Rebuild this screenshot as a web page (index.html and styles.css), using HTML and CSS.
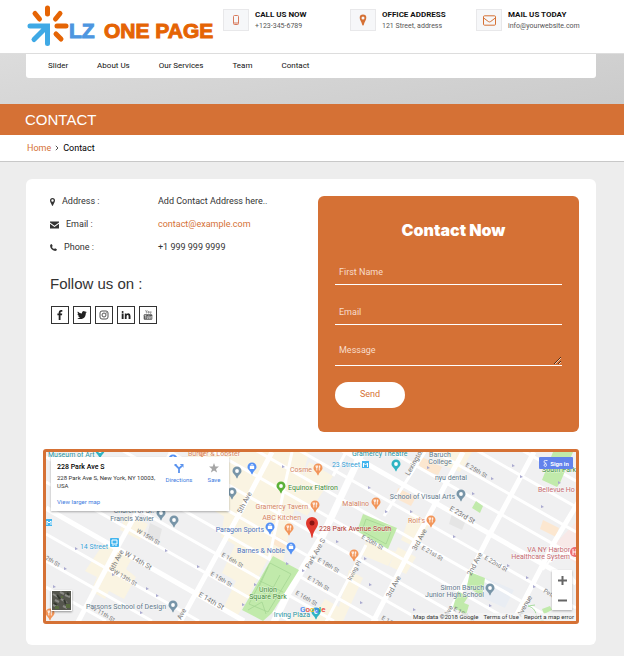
FILE: index.html
```html
<!DOCTYPE html>
<html lang="en">
<head>
    <meta charset="UTF-8">
    <meta name="viewport" content="width=device-width, initial-scale=1.0">
    <title>Contact - LZ One Page</title>
    <link rel="stylesheet" href="styles.css">
</head>
<body>
    <!-- Header -->
    <header class="header">
        <a class="logo" href="#" aria-label="LZ One Page">
            <svg width="190" height="44" viewBox="0 0 190 44">
                <g stroke="#e56404" stroke-width="5" stroke-linecap="round">
                    <path d="M20.500 4v6M8 9.500l4.500 5.500M33 9.500l-4.500 5.500M30 22h9M29 30l5 5"/>
                </g>
                <g stroke="#3fa9e5" stroke-width="5" stroke-linecap="round" fill="none">
                    <path d="M3 22h17.500v17.500M18 24.500L7 35.500"/>
                </g>
                <text class="logo-lz" x="42" y="34">LZ</text>
                <text class="logo-name" x="77" y="34">ONE PAGE</text>
            </svg>
        </a>
        <div class="info">
            <span class="info-icon">
                <svg width="6" height="10" viewBox="0 0 6 10"><path d="M1.500 .5h3q1 0 1 1v7q0 1-1 1h-3q-1 0-1-1v-7q0-1 1-1z" fill="none" stroke="#d87a5c"/><path d="M1 8h4" stroke="#d87a5c"/></svg>
            </span>
            <div>
                <h2>CALL US NOW</h2>
                <p>+123-345-6789</p>
            </div>
        </div>
        <div class="info">
            <span class="info-icon">
                <svg width="8" height="12" viewBox="0 0 8 12"><path d="M4 .5a3.300 3.300 0 0 1 3.300 3.300C7.300 6 5.500 8 4.700 11q-.7 1-1.400 0C2.500 8 .7 6 .7 3.800A3.300 3.300 0 0 1 4 .5zm0 2a1.500 1.500 0 1 0 0 3 1.500 1.500 0 0 0 0-3z" fill="#d57135" fill-rule="evenodd"/></svg>
            </span>
            <div>
                <h2>OFFICE ADDRESS</h2>
                <p>121 Street, address</p>
            </div>
        </div>
        <div class="info">
            <span class="info-icon">
                <svg width="13" height="11" viewBox="0 0 13 11"><path d="M1.500 .8h10q1 0 1 1v7.400q0 1-1 1h-10q-1 0-1-1V1.800q0-1 1-1zM.7 3l4.600 3.500q1.200.9 2.400 0L12.300 3" fill="none" stroke="#d57135"/></svg>
            </span>
            <div>
                <h2>MAIL US TODAY</h2>
                <p>info@yourwebsite.com</p>
            </div>
        </div>
    </header>

    <!-- Menu -->
    <div class="menu-wrap">
        <nav class="menu">
            <a href="#">Slider</a>
            <a href="#">About Us</a>
            <a href="#">Our Services</a>
            <a href="#">Team</a>
            <a href="#">Contact</a>
        </nav>
    </div>

    <div class="banner">
        <h1>CONTACT</h1>
    </div>
    <div class="breadcrumb">
        <a href="#">Home</a>
        <svg width="4" height="6" viewBox="0 0 4 6"><path d="M.8 .8L3 3 .8 5.200" fill="none" stroke="#555"/></svg>
        <span>Contact</span>
    </div>

    <main class="content">
        <div class="columns">
            <!-- Contact details -->
            <section class="details">
                <dl>
                    <div class="row">
                        <dt><svg width="5" height="8" viewBox="0 0 5 8"><path d="M2.500 0A2.500 2.500 0 0 1 5 2.500C5 4.500 3.500 5.500 3 7.600q-.5.700-1 0C1.500 5.500 0 4.500 0 2.500A2.500 2.500 0 0 1 2.500 0zm0 1.300a1.200 1.200 0 1 0 0 2.400 1.200 1.200 0 0 0 0-2.400z" fill="#333" fill-rule="evenodd"/></svg>Address :</dt>
                        <dd>Add Contact Address here..</dd>
                    </div>
                    <div class="row">
                        <dt><svg width="9" height="8" viewBox="0 0 9 8"><path d="M0 .5h9v1L4.500 4.700 0 1.500zM0 2.700l4.500 3.200L9 2.700v4.800H0z" fill="#333"/></svg>Email :</dt>
                        <dd><a href="#">contact@example.com</a></dd>
                    </div>
                    <div class="row">
                        <dt><svg width="7" height="7" viewBox="0 0 7 7"><path d="M.3.800L1.700.100 2.700 2 1.900 2.900Q2.600 4.400 4.100 5.100L5 4.300 6.900 5.300Q7 6.900 5.200 7 .2 5.800.1 1.800z" fill="#333"/></svg>Phone :</dt>
                        <dd>+1 999 999 9999</dd>
                    </div>
                </dl>
                <h3>Follow us on :</h3>
                <div class="social">
                    <a href="#" aria-label="Facebook"><svg width="10" height="10" viewBox="0 0 10 10"><path d="M7.300.1v1.600H6.200q-.7 0-.7.800v1.100h1.700L7 5.200H5.500V10H3.700V5.200H2.400V3.600h1.300V2.300Q3.800.2 5.900 0z" fill="#222"/></svg></a>
                    <a href="#" aria-label="Twitter"><svg width="10" height="10" viewBox="0 0 10 10"><path d="M9.800 2.200l-1 1Q8.700 7 5.900 8.500 3 9.800.2 8.200q1.800.1 2.900-.8Q1.700 7.200 1.200 6l.9-.1Q.6 5.400.5 3.900l.9.200Q0 2.900.8 1.400 2.500 3.400 4.900 3.500 4.700 1.300 6.700 1.100q.8 0 1.400.6l1.300-.5-.8 1.100z" fill="#222"/></svg></a>
                    <a href="#" aria-label="Instagram"><svg width="10" height="10" viewBox="0 0 10 10"><rect x="1" y="1" width="8" height="8" rx="2" fill="none" stroke="#555"/><circle cx="5" cy="5" r="2" fill="none" stroke="#555"/><circle cx="7.300" cy="2.800" r=".6" fill="#555"/></svg></a>
                    <a href="#" aria-label="LinkedIn"><svg width="10" height="10" viewBox="0 0 10 10"><path d="M.7 3.500h1.900V9H.7zM3.800 3.500h1.800v.8q.6-1 1.800-1Q9.500 3.400 9.500 6v3H7.600V6.200Q7.600 4.900 6.700 4.900q-1 0-1.100 1.300V9H3.800z" fill="#222"/><circle cx="1.600" cy="1.900" r="1" fill="#222"/></svg></a>
                    <a href="#" aria-label="YouTube"><svg width="10" height="10" viewBox="0 0 10 10"><path d="M2.500.2l.9 1.700v1.500M4.300.2L3.400 1.900M5 1.500v1.500h.9V1.500zM7 1.300v1.900h1V1.300" fill="none" stroke="#777" stroke-width=".7"/><rect x=".7" y="4.200" width="8.600" height="5.500" rx="1" fill="#555"/><path d="M1.500 5.500h1.800M2.400 5.500v3.200M4 6.200v2.300h.9V6.200M5.900 5.200v3.400h.7V6.500M7.700 7.300h.8V6.500h-.8v2h.9" fill="none" stroke="#fff" stroke-width=".5"/></svg></a>
                </div>
            </section>

            <!-- Contact form -->
            <form class="contact-form">
                <h2>Contact Now</h2>
                <input type="text" aria-label="First Name" placeholder="First Name">
                <input type="email" aria-label="Email" placeholder="Email">
                <textarea aria-label="Message" placeholder="Message"></textarea>
                <button type="button">Send</button>
            </form>
        </div>

        <!-- Map -->
        <div class="map">
            <svg class="map-canvas" viewBox="0 0 530 169" preserveAspectRatio="xMidYMid slice">
                <defs>
                    <path id="pin" d="M0-4.500A4.500 4.500 0 0 1 4.500 0C4.500 2.500 1.500 3.500.5 7q-.5.800-1 0C-1.500 3.500-4.500 2.500-4.500 0A4.500 4.500 0 0 1 0-4.500z"/>
                    <g id="place"><use href="#pin"/><circle r="1.900" fill="#fff"/></g>
                    <g id="food"><use href="#pin"/><path d="M-1.200-2.500v5M-2-2.500v1.800h1.600v-1.800M1.300-2.500v5M1.800-2.300v2" stroke="#fff" stroke-width=".8" fill="none"/></g>
                    <g id="shop"><use href="#pin"/><path d="M-2.200-1h4.400v3h-4.400z" fill="#fff"/><path d="M-1-1v-1.300h2V-1" stroke="#fff" stroke-width=".7" fill="none"/></g>
                </defs>
                <rect width="530" height="169" fill="#f0f0f1"/>

                <!-- Commercial areas -->
                <g fill="#faf4e2">
                    <path d="M144 0h80l-36 70-60-34zM188 0h75l-18 70-8 40-14-5-32 60-14-8 13-28-14-8 13-28-14-8z"/>
                    <path d="M60 88l28 15-8 14 10 8-12 22-15-8-4 8-14-8 6-14-12-6z"/>
                    <path d="M80 62l22 10-8 16-20-10zM263 10l24 14-26 40-15-8zM303 118l14 8-20 43h-32l14-22 14 8z"/>
                    <path d="M396 0h30l-12 20-20-8zM365 60l20 10-14 26-16-8zM352 95l18 10-10 17-17-8zM320 90l30 10-8 14-28-12zM250 160l25 8h-28z"/>
                </g>
                <g fill="#fce7d0">
                    <path d="M352 36l18 9-5 9-16-8zM372 3l24 12-4 8-18-6zM497 68l16 8-3 9-16-8zM228 83l14 7-4 8-13-7z"/>
                </g>
                <path d="M530 70l-23 24 23 18z" fill="#f8e9e8"/>
                <path d="M440 126l28 12-9 18-24-11z" fill="#e9edf3"/>
                <path d="M104 71l12 6-3 12-12-5zM406 62l14 6-4 10-13-6z" fill="#e5e5e5"/>

                <!-- Streets -->
                <g stroke="#fff" stroke-width="3" fill="none">
                    <path d="M0 135l60 34M0 109l106 60M0 82l153 87M0 30l244 139M0 5l288 164M0-20l332 189M0-45l376 214M0-71l421 240M0-96l465 265M0-121l510 290M0-146l530 302M0-197l530 302M0-222l530 302M0-247l530 302M0-273l530 302"/>
                    <path d="M320 93l-40 77M246 0l-20 93-3 14M338 64l41-64M160 2l-30 50M300 0l-13 24"/>
                    <path d="M32 170l39-74 20-36 35-60" stroke-width="5"/>
                    <path d="M133 172l64-117 29-55M327 170l40-77 50-93M399 170l45-88 44-82M467 170l42-81 24-40" stroke-width="5"/>
                    <path d="M0 56l198 113M0-171l530 302" stroke-width="5"/>
                    <path d="M228 170l14-29 35-58 39-83" stroke-width="7"/>
                </g>
                <path d="M504 110l11-9 15 7M497 118l10-14M522 119l8 12" stroke="#fff" stroke-width="2" fill="none"/>

                <!-- Parks -->
                <g fill="#c1eaab">
                    <path d="M227 104l26 14-27 43-9 8-21-11z"/>
                    <path d="M317 62l34 14-9 21-31-18z"/>
                    <path d="M424 120l15 6-3 19-15-11zM412 139l10 6-4 6 5 2-3 10-13-8z"/>
                    <path d="M430 49l7 5-3 7-8-5zM507 0h20l-13 31-3 4-15-7zM496 157l8-3 2 4-8 4z"/>
                </g>
                <path d="M482 154q7 2 8 8t8 7M482 154l7-1" stroke="#a9dca0" fill="none"/>
                <path d="M224 111l21 11-23 38-19-8zM214 129l23 11M222 115l-9 20 9 10 12-22M202 158l14-8 4 12" stroke="#a4d693" stroke-width=".8" fill="none"/>
                <path d="M320 67l26 10-6 15-24-13z" stroke="#a4d693" stroke-width=".8" fill="none"/>

                <!-- One way arrows -->
                <g fill="#a9a9cf">
                    <path d="M29 95l3 2-3 1zM18 115l3 2-3 1zM7 133l3 2-3 1zM66 121l3 2-3 1zM100 135l3 2-3 1zM110 142l3 2-3 1zM94 159l3 2-3 1zM119 97l3 2-3 1zM151 113l3 2-3 1zM208 131l3 2-3 1zM196 151l3 2-3 1zM240 110l3 2-3 1zM256 117l3 2-3 1zM290 88l3 2-3 1zM318 105l3 2-3 1zM323 131l3 2-3 1zM314 149l3 2-3 1zM236 13l3 2-3 1zM322 34l3 2-3 1zM381 14l3 2-3 1zM364 58l3 2-3 1zM407 83l3 2-3 1zM426 40l3 2-3 1zM466 12l3 2-3 1zM474 23l3 2-3 1zM445 25l3 2-3 1zM495 53l3 2-3 1zM512 29l3 2-3 1zM461 112l3 2-3 1zM480 124l3 2-3 1zM487 133l3 2-3 1zM443 152l3 2-3 1zM367 156l3 2-3 1zM339 58l3 2-3 1z"/>
                </g>

                <!-- Street names -->
                <g class="street">
                    <text transform="translate(78 103) rotate(30)" class="wide">W 14th St</text>
                    <text transform="translate(152 144) rotate(30)" class="wide">E 14th St</text>
                    <text transform="translate(403 58) rotate(30)" class="wide">E 23rd St</text>
                    <text transform="translate(90 80) rotate(30)">W 15th St</text>
                    <text transform="translate(67 121) rotate(30)">W 13th St</text>
                    <text transform="translate(45 157) rotate(30)">W 11th St</text>
                    <text transform="translate(-10 102) rotate(30)">W 12th St</text>
                    <text transform="translate(175 104) rotate(30)">E 16th St</text>
                    <text transform="translate(164 123) rotate(30)">E 15th St</text>
                    <text transform="translate(271 109) rotate(30)">E 18th St</text>
                    <text transform="translate(261 127) rotate(30)">E 17th St</text>
                    <text transform="translate(249 142) rotate(30)">E 16th St</text>
                    <text transform="translate(335 167) rotate(30)">E 17th St</text>
                    <text transform="translate(315 86) rotate(30)">E 20th St</text>
                    <text transform="translate(375 97) rotate(30)">E 21st St</text>
                    <text transform="translate(438 107) rotate(30)">E 22nd St</text>
                    <text transform="translate(419 14) rotate(30)">E 25th St</text>
                    <text transform="translate(407 158) rotate(30)">E 19th St</text>
                    <text transform="translate(67 120) rotate(-62)" class="wide">6th Ave</text>
                    <text transform="translate(195 62) rotate(-62)" class="wide">5th Ave</text>
                    <text transform="translate(135 168) rotate(-62)" class="wide">Ave</text>
                    <text transform="translate(263 117) rotate(-60)" class="wide">Park Ave S</text>
                    <text transform="translate(305 129) rotate(-62)">Irving Pl</text>
                    <text transform="translate(344 146) rotate(-62)" class="wide">3rd Ave</text>
                    <text transform="translate(370 99) rotate(-62)" class="wide">3rd Ave</text>
                    <text transform="translate(425 124) rotate(-62)" class="wide">2nd Ave</text>
                    <text transform="translate(402 165) rotate(-62)" class="wide">Ave</text>
                    <text transform="translate(475 165) rotate(-60)" class="wide">Avenue</text>
                    <text transform="translate(363 24) rotate(-60)" class="wide">Lexington</text>
                    <text transform="translate(497 140) rotate(30)">Pete</text>
                </g>

                <!-- Places -->
                <g fill="#f29559">
                    <use href="#food" x="272" y="16"/><use href="#food" x="269" y="53"/>
                    <use href="#food" x="330" y="50"/><use href="#food" x="243" y="76"/>
                    <use href="#food" x="385" y="68"/><use href="#food" x="308" y="102"/>
                    <use href="#food" x="4" y="161"/><use href="#food" x="156" y="-1"/>
                </g>
                <g fill="#5491f5">
                    <use href="#shop" x="206" y="15"/><use href="#shop" x="224" y="75"/>
                    <use href="#shop" x="245" y="95"/><use href="#shop" x="127" y="7"/>
                </g>
                <g fill="#7895a8">
                    <use href="#place" x="191" y="19"/><use href="#place" x="186" y="40"/>
                    <use href="#place" x="128" y="68"/><use href="#place" x="115" y="61"/>
                    <use href="#place" x="127" y="153"/><use href="#place" x="415" y="42"/>
                    <use href="#place" x="444" y="136"/>
                </g>
                <g fill="#2fb4c3">
                    <use href="#place" x="350" y="12"/><use href="#place" x="270" y="160"/>
                    <use href="#place" x="54" y="-1"/>
                </g>
                <use href="#place" x="235" y="34" fill="#5bb138"/>
                <circle cx="529" cy="100" r="5" fill="#ed6f74"/>
                <path d="M527 97v6M530 97v6M527 100h3" stroke="#fff"/>
                <g>
                    <rect x="64" y="86" width="9" height="9" rx="1" fill="#43b5ee"/>
                    <path d="M66 88h5v4h-5zM67 93v1M70 93v1" fill="none" stroke="#fff"/>
                    <rect x="0" y="67" width="6" height="7" fill="#43b5ee"/>
                    <path d="M1 73v-4l2 2 2-2v4" fill="none" stroke="#fff"/>
                    <rect x="316" y="9" width="7" height="7" fill="#43b5ee"/>
                    <path d="M317.500 15v-4l2 2 2-2v4" fill="none" stroke="#fff"/>
                </g>

                <g class="place">
                    <g fill="#d4835f">
                        <text x="142" y="4">Burger &amp; Lobster</text>
                        <text x="266" y="20" text-anchor="end">Cosme</text>
                        <text x="262" y="57" text-anchor="end">Gramercy Tavern</text>
                        <text x="255" y="68" text-anchor="end">ABC Kitchen</text>
                        <text x="323" y="54" text-anchor="end">Maialino</text>
                        <text x="379" y="71" text-anchor="end">Rolf's</text>
                    </g>
                    <g fill="#4f74b8">
                        <text x="218" y="80" text-anchor="end">Paragon Sports</text>
                        <text x="239" y="101" text-anchor="end">Barnes &amp; Noble</text>
                    </g>
                    <g fill="#62798a">
                        <text x="108" y="61" text-anchor="end">Church of St.</text>
                        <text x="108" y="69" text-anchor="end">Francis Xavier</text>
                        <text x="120" y="157" text-anchor="end">Parsons School of Design</text>
                        <text x="409" y="47" text-anchor="end">School of Visual Arts</text>
                        <text x="394" y="5" text-anchor="middle">Baruch</text>
                        <text x="394" y="12" text-anchor="middle">College</text>
                        <text x="405" y="28" text-anchor="middle">nyu dental</text>
                        <text x="438" y="138" text-anchor="end">Simon Baruch</text>
                        <text x="438" y="145" text-anchor="end">Junior High School</text>
                    </g>
                    <g fill="#25929f">
                        <text x="2" y="5">Museum of Art</text>
                        <text x="306" y="4">Gramercy Theatre</text>
                        <text x="264" y="165" text-anchor="end">Irving Plaza</text>
                    </g>
                    <g fill="#359fd6">
                        <text x="62" y="97" text-anchor="end">14 Street</text>
                        <text x="314" y="15" text-anchor="end">23 Street</text>
                    </g>
                    <g fill="#3f8a36">
                        <text x="242" y="38">Equinox Flatiron</text>
                        <text x="222" y="140" text-anchor="middle">Union</text>
                        <text x="222" y="147" text-anchor="middle">Square Park</text>
                        <text x="496" y="20">South Park</text>
                    </g>
                    <g fill="#c56a70">
                        <text x="492" y="40">Bellevue Ho</text>
                        <text x="524" y="100" text-anchor="end">VA NY Harbor</text>
                        <text x="524" y="107" text-anchor="end">Healthcare System</text>
                    </g>
                    <text x="273" y="79" fill="#b0362f">228 Park Avenue South</text>
                </g>
                <path d="M266 65a6 6 0 0 1 6 6c0 5-4.500 7-5.400 14q-.6 2-1.200 0C264.500 78 260 76 260 71a6 6 0 0 1 6-6z" fill="#e0392d" />
                <circle cx="266" cy="71" r="2.500" fill="#8a1410"/>
                <text x="254" y="160" class="google"><tspan fill="#4285f4">G</tspan><tspan fill="#ea4335">o</tspan><tspan fill="#fbbc05">o</tspan><tspan fill="#4285f4">g</tspan><tspan fill="#34a853">l</tspan><tspan fill="#ea4335">e</tspan></text>
            </svg>

            <div class="map-card">
                <div class="map-place">
                    <strong>228 Park Ave S</strong>
                    <p>228 Park Ave S, New York, NY 10003, USA</p>
                    <a href="#">View larger map</a>
                </div>
                <a class="map-action" href="#">
                    <svg width="10" height="10" viewBox="0 0 10 10"><path d="M5 10V5.500L1.500 2M5 5.500L7.800 3" fill="none" stroke="#5b93ee" stroke-width="1.800"/><path d="M5.800 1h3.700v3.700zM.5 1l2 0 0 2-2 0z" fill="#5b93ee"/></svg>
                    Directions
                </a>
                <a class="map-action" href="#">
                    <svg width="10" height="10" viewBox="0 0 10 10"><path d="M5 0l1.300 3.500 3.700.1-3 2.300L8.100 9.500 5 7.400 1.900 9.500 3 5.900 0 3.600l3.700-.1z" fill="#a5a5a5"/></svg>
                    Save
                </a>
            </div>
            <button class="sign-in" type="button"><svg width="5" height="7" viewBox="0 0 5 7"><path d="M4.500.5H2.400a1.300 1.300 0 1 0 .6 2.400l-.2 1A1.300 1.300 0 1 1 1 5.200q0-1.200 1.800-1.300" fill="none" stroke="#fff" stroke-width=".8"/></svg>Sign in</button>
            <button class="satellite" type="button" aria-label="Satellite view">
                <svg width="19" height="19" viewBox="0 0 19 19"><rect width="19" height="19" fill="#55564e"/><path d="M1 3l5 3M8 1l4 2M13 4l5 2M3 9l4 2M9 8l6 4M1 14l5 2M11 15l4 2" stroke="#8b8b86" stroke-width="2"/><path d="M5 4l3 4M12 9l2 4M2 12l3 2M15 2l2 2" stroke="#34382f" stroke-width="2"/><path d="M3 15h4v3H3zM14 13h4v4h-4zM9 5h2v2H9z" fill="#586b3f"/></svg>
            </button>
            <div class="zoom">
                <button type="button" aria-label="Zoom in"><svg width="9" height="9" viewBox="0 0 9 9"><path d="M0 4.500h9M4.500 0v9" stroke="#666" stroke-width="2"/></svg></button>
                <button type="button" aria-label="Zoom out"><svg width="9" height="9" viewBox="0 0 9 9"><path d="M0 4.500h9" stroke="#666" stroke-width="2"/></svg></button>
            </div>
            <div class="map-terms">
                <span>Map data ©2018 Google</span>
                <a href="#">Terms of Use</a>
                <a href="#">Report a map error</a>
            </div>
        </div>
    </main>
</body>
</html>
```
FILE: styles.css
```css
* {
    box-sizing: border-box;
}
body {
    margin: 0;
    background-color: #ededed;
    font-family: Roboto, "Liberation Sans", Arial, sans-serif;
    font-size: 9px;
    line-height: 11px;
    color: #333;
}
h1, h2, h3, p, dl, dd {
    margin: 0;
    font-weight: normal;
}
a {
    color: #d57135;
    text-decoration: none;
}
svg {
    display: block;
    flex: none;
}

/* Header */
.header {
    display: grid;
    grid-template-columns: 196px 127px 126px 1fr;
    height: 54px;
    padding: 0 28px 0 27px;
    background-color: #fff;
    border-bottom: 1px solid #ddd;
}
.logo {
    padding-top: 4px;
}
.logo-lz, .logo-name {
    font-family: "Liberation Sans", Arial, sans-serif;
    font-size: 21px;
    font-weight: bold;
    fill: #4d96e0;
    stroke: #4d96e0;
}
.logo-name {
    fill: #e56404;
    stroke: #e56404;
}
.info {
    display: flex;
    align-items: flex-start;
    gap: 6px;
    padding-top: 9px;
}
.info-icon {
    display: flex;
    align-items: center;
    justify-content: center;
    width: 26px;
    height: 22px;
    background-color: #f6f7f9;
    border: 1px solid #e8e8ea;
}
.info h2 {
    font-size: 8px;
    font-weight: bold;
    color: #111;
}
.info p {
    font-size: 7px;
    line-height: 12px;
    color: #555;
}

/* Menu */
.menu-wrap {
    height: 50px;
    padding: 0 28px 0 26px;
    background: linear-gradient(170deg, #dcdcdc, #cbcbcb);
}
.menu {
    display: flex;
    gap: 29px;
    padding: 6px 22px 7px;
    background-color: #fff;
    border-radius: 0 0 3px 3px;
    font-size: 8px;
}
.menu a {
    color: #111;
}

/* Page title */
.banner {
    padding: 7px 25px 6px;
    background-color: #d57135;
}
.banner h1 {
    font-family: "Liberation Sans", Arial, sans-serif;
    font-size: 15px;
    line-height: 18px;
    color: #fff;
}
.breadcrumb {
    display: flex;
    align-items: center;
    gap: 4px;
    height: 27px;
    padding: 0 27px;
    background-color: #fff;
    border-bottom: 1px solid #c8c8c8;
    color: #000;
}

/* Content */
.content {
    margin: 17px 28px 11px 26px;
    padding: 17px 17px 21px;
    background-color: #fff;
    border-radius: 6px;
}
.columns {
    display: grid;
    grid-template-columns: 275fr 261fr;
    margin-bottom: 17px;
}
.details {
    padding-left: 7px;
}
.row {
    display: grid;
    grid-template-columns: 108px 1fr;
    margin-bottom: 12px;
}
.row dt {
    display: flex;
    align-items: center;
    gap: 7px;
}
.details h3 {
    margin: 22px 0 13px;
    font-family: "Liberation Sans", Arial, sans-serif;
    font-size: 15px;
    line-height: 18px;
}
.social {
    display: flex;
    gap: 4px;
    padding-left: 1px;
}
.social a {
    display: flex;
    align-items: center;
    justify-content: center;
    width: 18px;
    height: 18px;
    border: 1px solid #333;
}

/* Contact form */
.contact-form {
    display: flex;
    flex-direction: column;
    align-items: flex-start;
    padding: 24px 17px;
    background-color: #d57135;
    border-radius: 6px;
}
.contact-form h2 {
    align-self: center;
    margin-bottom: 16px;
    padding-left: 10px;
    font-family: Inter, "Arial Black", sans-serif;
    font-size: 16px;
    font-weight: 900;
    line-height: 20px;
    color: #fff;
}
.contact-form input, .contact-form textarea {
    display: block;
    width: 100%;
    height: 29px;
    margin: 0 0 11px;
    padding: 9px 4px 5px;
    background: transparent;
    border: none;
    border-bottom: 1px solid #fff;
    border-radius: 0;
    font-family: inherit;
    font-size: 9px;
    line-height: 11px;
    color: #fff;
}
.contact-form textarea {
    height: 30px;
    margin-bottom: 16px;
    overflow: hidden;
}
.contact-form ::placeholder {
    color: #f8dccb;
}
.contact-form button {
    width: 70px;
    height: 26px;
    padding: 0 0 2px;
    background-color: #fff;
    border: none;
    border-radius: 13px;
    font-family: inherit;
    font-size: 9px;
    color: #d57135;
    cursor: pointer;
}

/* Map */
.map {
    position: relative;
    border: 3px solid #d57135;
    border-radius: 3px;
    overflow: hidden;
    font-size: 6px;
    line-height: 8px;
}
.map a {
    color: #3d7be0;
}
.map button {
    border: none;
    cursor: pointer;
}
.map-canvas {
    width: 100%;
    height: 169px;
}
.street {
    font-size: 6px;
    fill: #777;
}
.street .wide {
    font-size: 7px;
}
.place {
    font-size: 7px;
    stroke: #fff;
    stroke-width: 1px;
    stroke-opacity: 0.6;
    paint-order: stroke;
}
.google {
    font-size: 8px;
    font-weight: 500;
}
.map-card {
    position: absolute;
    top: 5px;
    left: 5px;
    display: flex;
    gap: 7px;
    width: 178px;
    height: 54px;
    padding: 6px 0 6px 6px;
    background-color: #fff;
    box-shadow: 0 1px 2px rgba(0, 0, 0, 0.3);
}
.map-place {
    flex: none;
    width: 101px;
}
.map-place strong {
    display: block;
    margin-bottom: 3px;
    font-size: 7px;
    font-weight: 500;
    color: #000;
}
.map-place p {
    margin-bottom: 8px;
}
.map-action {
    display: flex;
    flex-direction: column;
    align-items: center;
    gap: 3px;
    width: 28px;
}
.sign-in {
    position: absolute;
    top: 5px;
    right: 3px;
    display: flex;
    align-items: center;
    justify-content: center;
    gap: 2px;
    width: 34px;
    height: 12px;
    padding: 0;
    background-color: #6283ec;
    border-radius: 1px;
    font: bold 6px Roboto, sans-serif;
    color: #fff;
}
.satellite {
    position: absolute;
    bottom: 10px;
    left: 5px;
    padding: 1px;
    background-color: #fff;
    box-shadow: 0 1px 2px rgba(0, 0, 0, 0.4);
}
.zoom {
    position: absolute;
    right: 4px;
    bottom: 11px;
    background-color: #fff;
    box-shadow: 0 1px 2px rgba(0, 0, 0, 0.3);
}
.zoom button {
    display: flex;
    align-items: center;
    justify-content: center;
    width: 20px;
    height: 20px;
    padding: 0;
    background: none;
}
.map-terms {
    position: absolute;
    right: 0;
    bottom: 0;
    display: flex;
    gap: 5px;
    padding: 0 2px;
    background-color: rgba(245, 245, 245, 0.7);
    color: #333;
}
.map-terms a {
    color: #333;
}
```
